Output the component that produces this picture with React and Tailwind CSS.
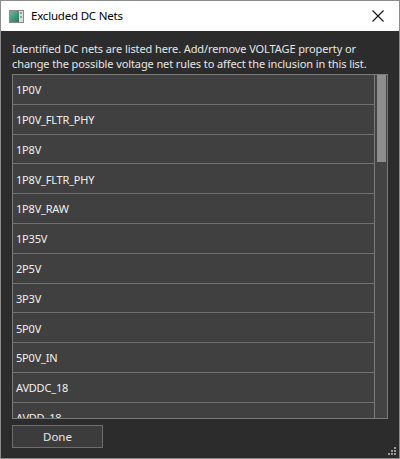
import React from "react";

const nets = [
  "1P0V",
  "1P0V_FLTR_PHY",
  "1P8V",
  "1P8V_FLTR_PHY",
  "1P8V_RAW",
  "1P35V",
  "2P5V",
  "3P3V",
  "5P0V",
  "5P0V_IN",
  "AVDDC_18",
  "AVDD_18",
];

function AppIcon() {
  return (
    <svg width="15" height="13" viewBox="0 0 15 13">
      <rect x="0.5" y="0.5" width="14" height="12" fill="#dcdcdc" stroke="#8a8a8a" />
      <defs>
        <linearGradient id="g" x1="0" y1="0" x2="1" y2="1">
          <stop offset="0" stopColor="#6fb59a" />
          <stop offset="1" stopColor="#1f7a60" />
        </linearGradient>
      </defs>
      <rect x="1" y="1" width="9" height="11" fill="url(#g)" />
      <rect x="11" y="2" width="2" height="2" fill="#9a9a9a" />
      <rect x="11" y="6" width="2" height="2" fill="#9a9a9a" />
    </svg>
  );
}

function Grip() {
  const dots = [
    [8, 0],
    [8, 3],
    [5, 3],
    [8, 6],
    [5, 6],
    [2, 6],
  ];
  return (
    <svg width="11" height="9" viewBox="0 0 11 9" className="absolute right-[2px] bottom-[2px]">
      {dots.map(([x, y], i) => (
        <rect key={i} x={x} y={y} width="2" height="2" fill="#9a9a9a" />
      ))}
    </svg>
  );
}

export default function App() {
  return (
    <div
      className="relative w-[400px] h-[459px] flex flex-col border border-[#8c8c8c] bg-[#2c2c2c] overflow-hidden"
      style={{ fontFamily: '"Noto Sans", "Open Sans", Arial, sans-serif' }}
    >
      <div className="h-[30px] shrink-0 bg-white flex items-center pl-[8px] pr-[8px]">
        <AppIcon />
        <span className="ml-[7px] text-[11.5px] tracking-[-0.2px] text-black leading-none">Excluded DC Nets</span>
        <div className="ml-auto w-[30px] h-[30px] flex items-center justify-center mr-[-2px]">
          <svg width="12" height="12" viewBox="0 0 12 12">
            <path d="M0.5 0.5 L11.5 11.5 M11.5 0.5 L0.5 11.5" stroke="#111" strokeWidth="1.1" fill="none" />
          </svg>
        </div>
      </div>
      <div className="flex-1 flex flex-col px-[11px] pt-[10px]">
        <p className="text-[11px] leading-[15px] text-[#e6e6e6] tracking-[-0.1px]">
          Identified DC nets are listed here. Add/remove VOLTAGE property or
          <br />
          change the possible voltage net rules to affect the inclusion in this list.
        </p>
        <div className="mt-[3px] h-[345px] border border-[#7a7a7a] flex overflow-hidden">
          <div className="flex-1 overflow-hidden border-r border-[#7a7a7a] bg-[#404040]">
            {nets.map((n) => (
              <div
                key={n}
                className="h-[29.8px] flex items-center pl-[3px] pt-[2px] border-b border-[#707070] text-[11px] tracking-[-0.2px] text-[#f0f0f0] bg-[#404040]"
              >
                {n}
              </div>
            ))}
          </div>
          <div className="w-[12px] bg-[#434343] flex justify-center">
            <div className="w-[9px] h-[87px] bg-[#8e8e8e] ml-[1px]" />
          </div>
        </div>
        <button className="mt-[6px] w-[91px] h-[23px] bg-[#3c3c3c] border border-[#6e6e6e] text-[11.5px] text-[#e6e6e6] flex items-center justify-center">
          Done
        </button>
      </div>
      <Grip />
    </div>
  );
}
